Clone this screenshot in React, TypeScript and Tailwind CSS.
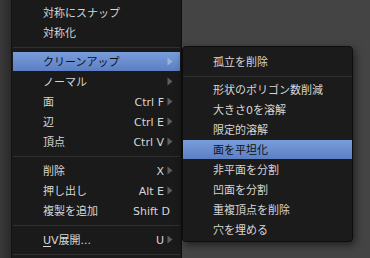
import React from "react";

const font = { fontFamily: '"DejaVu Sans", "Noto Sans CJK JP", sans-serif' };

function Arrow({ active }: { active?: boolean }) {
  return (
    <svg width="6" height="9" viewBox="0 0 6 9" className="shrink-0">
      <path d="M0.5 0.5 L5.5 4.5 L0.5 8.5 Z" fill={active ? "#9fb3d6" : "#5e5e5e"} />
    </svg>
  );
}

type Item = { label: React.ReactNode; sc?: string; arrow?: boolean; active?: boolean } | "sep";

const mainItems: Item[] = [
  { label: "対称にスナップ" },
  { label: "対称化" },
  "sep",
  { label: "クリーンアップ", arrow: true, active: true },
  { label: "ノーマル", arrow: true },
  { label: "面", sc: "Ctrl F", arrow: true },
  { label: "辺", sc: "Ctrl E", arrow: true },
  { label: "頂点", sc: "Ctrl V", arrow: true },
  "sep",
  { label: "削除", sc: "X", arrow: true },
  { label: "押し出し", sc: "Alt E", arrow: true },
  { label: "複製を追加", sc: "Shift D" },
  "sep",
  {
    label: (
      <>
        <span className="underline underline-offset-2">U</span>V展開...
      </>
    ),
    sc: "U",
    arrow: true,
  },
  "sep",
];

const subItems: Item[] = [
  { label: "孤立を削除" },
  "sep",
  { label: "形状のポリゴン数削減" },
  { label: "大きさ0を溶解" },
  { label: "限定的溶解" },
  { label: "面を平坦化", active: true },
  { label: "非平面を分割" },
  { label: "凹面を分割" },
  { label: "重複頂点を削除" },
  { label: "穴を埋める" },
];

function Sep() {
  return (
    <div className="h-[9px] flex items-center">
      <div className="h-px w-full bg-[#303030]" />
    </div>
  );
}

function Row({ item, textPad }: { item: Exclude<Item, "sep">; textPad: string }) {
  return (
    <div className="h-[20px] flex">
      <div
        className={
          "flex-1 h-[19px] flex items-center pr-[7px] " +
          textPad +
          " " +
          (item.active
            ? "bg-gradient-to-b from-[#7a9ddb] to-[#5b7fc2] text-[#101010]"
            : "text-[#d6d6d6]")
        }
      >
        <span className="flex-1 whitespace-nowrap pt-[2px]">{item.label}</span>
        {item.sc && <span className="whitespace-nowrap mr-[3px] pt-[2px]">{item.sc}</span>}
        {item.arrow && <Arrow active={item.active} />}
      </div>
    </div>
  );
}

export default function App() {
  return (
    <div
      className="relative w-[370px] h-[258px] overflow-hidden flex text-[11px] leading-none bg-[#444444]"
      style={font}
    >
      <div className="w-[12px] h-full bg-gradient-to-r from-[#3a3a3a] to-[#2a2a2a] border-r border-[#141414]" />
      <div className="w-[170px] h-full bg-[#1a1a1a] border-r border-[#0f0f0f] pt-[3px] px-px">
        {mainItems.map((it, i) =>
          it === "sep" ? <Sep key={i} /> : <Row key={i} item={it} textPad="pl-[30px]" />
        )}
      </div>
      <div className="flex-1 h-full bg-[#444444]" />

      <div className="absolute left-[182px] top-[46px] w-[171px] h-[196px] rounded-[4px] bg-[#1b1b1b] border border-[#0c0c0c] shadow-[2px_3px_8px_rgba(0,0,0,0.55)] pt-[5px] overflow-hidden">
        {subItems.map((it, i) =>
          it === "sep" ? (
            <div key={i} className="h-[8px] flex items-center">
              <div className="h-px w-full bg-[#303030]" />
            </div>
          ) : (
            <Row key={i} item={it} textPad="pl-[30px]" />
          )
        )}
      </div>
    </div>
  );
}
